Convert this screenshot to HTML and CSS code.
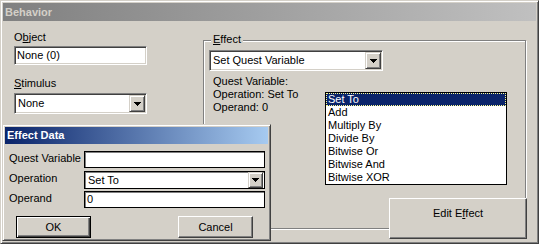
FILE: index.html
```html
<!DOCTYPE html>
<html lang="en">
<head>
    <meta charset="UTF-8">
    <title>Behavior</title>
    <link rel="stylesheet" href="styles.css">
</head>
<body>
    <div class="window">
        <div class="titlebar inactive">Behavior</div>

        <div class="client">
            <div class="left-col">
                <div class="label">O<u>b</u>ject</div>
                <div class="textbox">None (0)</div>

                <div class="label label-stimulus"><u>S</u>timulus</div>
                <div class="combo combo-stimulus">
                    <span class="combo-text">None</span>
                    <span class="combo-btn"><svg width="7" height="4" shape-rendering="crispEdges"><path d="M0 0h7v1H0zM1 1h5v1H1zM2 2h3v1H2zM3 3h1v1H3z"/></svg></span>
                </div>
            </div>

            <div class="right-col">
                <div class="group">
                    <div class="group-title"><u>E</u>ffect</div>
                    <div class="combo combo-effect">
                        <span class="combo-text">Set Quest Variable</span>
                        <span class="combo-btn"><svg width="7" height="4" shape-rendering="crispEdges"><path d="M0 0h7v1H0zM1 1h5v1H1zM2 2h3v1H2zM3 3h1v1H3z"/></svg></span>
                    </div>

                    <div class="info-row">
                        <div class="info">
                            Quest Variable:<br>
                            Operation: Set To<br>
                            Operand: 0
                        </div>
                        <ul class="listbox">
                            <li class="selected">Set To</li>
                            <li>Add</li>
                            <li>Multiply By</li>
                            <li>Divide By</li>
                            <li>Bitwise Or</li>
                            <li>Bitwise And</li>
                            <li>Bitwise XOR</li>
                        </ul>
                    </div>
                </div>
                <div class="btn btn-edit">Edit E<u>f</u>fect</div>
            </div>
        </div>

        <!-- floating child dialog -->
        <div class="dialog">
            <div class="titlebar active">Effect Data</div>
            <div class="dlg-body">
                <div class="dlg-row">
                    <div class="dlg-label">Quest Variable</div>
                    <div class="dlg-input"></div>
                </div>
                <div class="dlg-row row-operation">
                    <div class="dlg-label">Operation</div>
                    <div class="dlg-combo">
                        <span class="combo-text">Set To</span>
                        <span class="combo-btn"><svg width="7" height="4" shape-rendering="crispEdges"><path d="M0 0h7v1H0zM1 1h5v1H1zM2 2h3v1H2zM3 3h1v1H3z"/></svg></span>
                    </div>
                </div>
                <div class="dlg-row row-operand">
                    <div class="dlg-label">Operand</div>
                    <div class="dlg-input">0</div>
                </div>

                <div class="dlg-buttons">
                    <div class="btn btn-default">OK</div>
                    <div class="btn btn-cancel">Cancel</div>
                </div>
            </div>
        </div>
    </div>
</body>
</html>
```

FILE: styles.css
```css
* {
    margin: 0;
    padding: 0;
    box-sizing: border-box;
}

body {
    font-family: "Liberation Sans", Arial, sans-serif;
    font-size: 11px;
    color: #000;
    background: #d4d0c8;
}

u {
    text-decoration: underline;
    text-underline-offset: 1px;
}

/* window frame */
.window {
    position: relative;
    display: flex;
    flex-direction: column;
    width: 539px;
    height: 244px;
    padding: 2px;
    background: #d4d0c8;
    border: 1px solid;
    border-color: #d4d0c8 #404040 #404040 #d4d0c8;
    box-shadow: inset 1px 1px #fff, inset -1px -1px #808080;
}

.titlebar {
    height: 18px;
    line-height: 18px;
    padding-left: 2px;
    font-weight: bold;
}

.titlebar.inactive {
    background: linear-gradient(to right, #808080, #c0c0c0);
    color: #d4d0c8;
}

.titlebar.active {
    height: 17px;
    line-height: 17px;
    background: linear-gradient(to right, #0a246a, #a6caf0);
    color: #fff;
}

.client {
    display: flex;
    flex: 1;
    padding-left: 11px;
}

/* left column */
.left-col {
    width: 133px;
    padding-top: 10px;
}

.label {
    line-height: 13px;
    margin-bottom: 2px;
}

.label-stimulus {
    margin-top: 12px;
    margin-bottom: 3px;
}

.textbox {
    height: 19px;
    padding-left: 2px;
    line-height: 16px;
    background: #fff;
    border: 1px solid;
    border-color: #808080 #fff #fff #808080;
    box-shadow: inset 1px 1px #404040, inset -1px -1px #d4d0c8;
}

.combo {
    display: flex;
    height: 21px;
    background: #fff;
    border: 1px solid;
    border-color: #808080 #fff #fff #808080;
    box-shadow: inset 1px 1px #404040, inset -1px -1px #d4d0c8;
    padding: 1px;
}

.combo-text {
    flex: 1;
    padding-left: 2px;
    line-height: 17px;
}

.combo-btn {
    display: flex;
    align-items: center;
    justify-content: center;
    width: 16px;
    background: #d4d0c8;
    border: 1px solid;
    border-color: #d4d0c8 #404040 #404040 #d4d0c8;
    box-shadow: inset 1px 1px #fff, inset -1px -1px #808080;
}

.combo-stimulus {
    width: 133px;
}

/* effect group */
.right-col {
    display: flex;
    flex-direction: column;
    width: 324px;
    margin-left: 56px;
    padding-top: 19px;
}

.group {
    width: 323px;
    height: 189px;
    border: 1px solid #808080;
    box-shadow: inset 1px 1px #fff, 1px 1px #fff;
}

.group-title {
    width: fit-content;
    margin: -8px 0 0 7px;
    padding: 0 2px;
    line-height: 13px;
    background: #d4d0c8;
}

.combo-effect {
    width: 174px;
    margin: 4px 0 0 5px;
}

.info-row {
    display: flex;
    margin-top: 4px;
}

.info {
    width: 112px;
    margin-left: 9px;
    line-height: 13px;
}

.listbox {
    width: 182px;
    margin-top: 17px;
    list-style: none;
    background: #fff;
    border: 1px solid #000;
}

.listbox li {
    height: 13px;
    line-height: 13px;
    padding-left: 2px;
}

.listbox li.selected {
    background: #0a246a;
    color: #fff;
    outline: 1px dotted #ffff90;
    outline-offset: -1px;
}

/* buttons */
.btn {
    display: flex;
    justify-content: center;
    align-items: center;
    background: #d4d0c8;
    border: 1px solid;
    border-color: #fff #404040 #404040 #fff;
    box-shadow: inset -1px -1px #808080;
}

.btn-edit {
    align-self: flex-end;
    align-items: flex-start;
    width: 138px;
    height: 41px;
    margin-top: -31px;
    padding-top: 8px;
    line-height: 13px;
}

/* Effect Data dialog */
.dialog {
    position: absolute;
    left: 1px;
    top: 123px;
    width: 269px;
    height: 117px;
    padding: 2px;
    background: #d4d0c8;
    border: 1px solid;
    border-color: #d4d0c8 #404040 #404040 #d4d0c8;
    box-shadow: inset 1px 1px #fff, inset -1px -1px #808080;
}

.dlg-body {
    padding: 7px 0 0 4px;
}

.dlg-row {
    display: flex;
}

.row-operation {
    margin-top: 3px;
}

.row-operand {
    margin-top: 2px;
}

.dlg-label {
    width: 75px;
    line-height: 13px;
    padding-top: 1px;
}

.dlg-input {
    width: 181px;
    height: 17px;
    padding-left: 2px;
    line-height: 15px;
    background: #fff;
    border: 1px solid #000;
    box-shadow: inset 1px 1px #808080;
}

.dlg-combo {
    display: flex;
    width: 181px;
    height: 18px;
    background: #fff;
    border: 1px solid #000;
    box-shadow: inset 1px 1px #808080;
    padding: 0 1px 0 0;
}

.dlg-combo .combo-text {
    line-height: 16px;
    padding-left: 3px;
}

.dlg-combo .combo-btn {
    width: 15px;
    margin: 0;
}

.dlg-buttons {
    display: flex;
    margin-top: 8px;
    padding-left: 7px;
}

.dlg-buttons .btn {
    width: 75px;
    height: 22px;
}

.btn-default {
    border: 1px solid #000;
    box-shadow: inset 1px 1px #fff, inset -1px -1px #404040, inset -2px -2px #808080;
}

.btn-cancel {
    margin-left: 87px;
}
```
